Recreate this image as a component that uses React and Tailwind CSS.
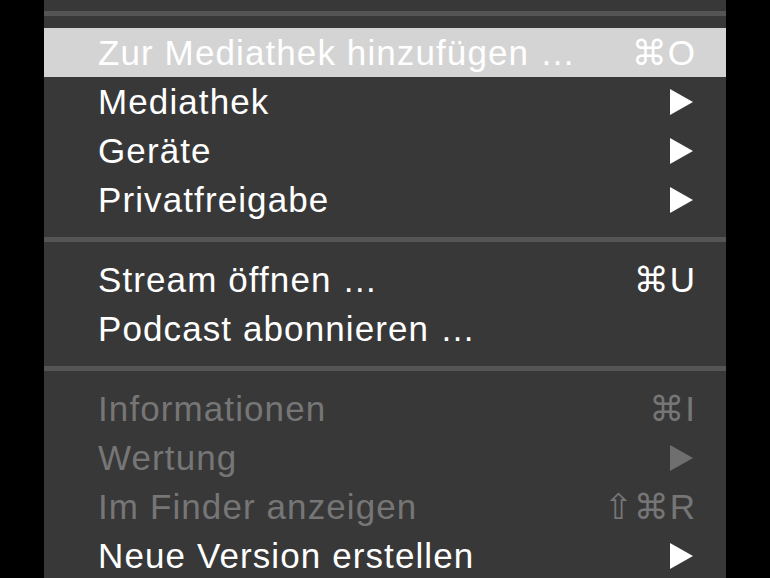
import React from 'react';

const Arrow = ({ disabled }) => (
    <svg width="23" height="26" viewBox="0 0 23 26" className="mr-[3px]">
        <polygon points="0,0 23,13 0,26" fill={disabled ? '#6f6f6f' : '#ffffff'} />
    </svg>
);

const Item = ({ label, shortcut, submenu, disabled, active }) => (
    <div
        className={`h-[49px] flex items-center justify-between pl-[54px] pr-[30px] ${active ? 'bg-[#d4d4d4]' : ''} ${disabled ? 'text-[#767676]' : 'text-white'}`}
    >
        <span className="tracking-[1.1px]">{label}</span>
        {shortcut && <span className="tracking-[1px]">{shortcut}</span>}
        {submenu && <Arrow disabled={disabled} />}
    </div>
);

const Separator = () => (
    <div className="h-[31px] flex items-center">
        <div className="w-full h-[5px] bg-[#555555]" />
    </div>
);

export default function App() {
    return (
        <div className="w-[770px] h-[578px] bg-black overflow-hidden">
            <div
                className="ml-[44px] w-[682px] h-full bg-[#383838] text-[35px] leading-none"
                style={{ fontFamily: '"Liberation Sans", "DejaVu Sans", sans-serif' }}
            >
                <div className="h-[28px] pt-[11px]">
                    <div className="h-[5px] bg-[#555555]" />
                </div>
                <Item label="Zur Mediathek hinzufügen …" shortcut="⌘O" active />
                <Item label="Mediathek" submenu />
                <Item label="Geräte" submenu />
                <Item label="Privatfreigabe" submenu />
                <Separator />
                <Item label="Stream öffnen …" shortcut="⌘U" />
                <Item label="Podcast abonnieren …" />
                <Separator />
                <Item label="Informationen" shortcut="⌘I" disabled />
                <Item label="Wertung" submenu disabled />
                <Item label="Im Finder anzeigen" shortcut="⇧⌘R" disabled />
                <Item label="Neue Version erstellen" submenu />
            </div>
        </div>
    );
}
